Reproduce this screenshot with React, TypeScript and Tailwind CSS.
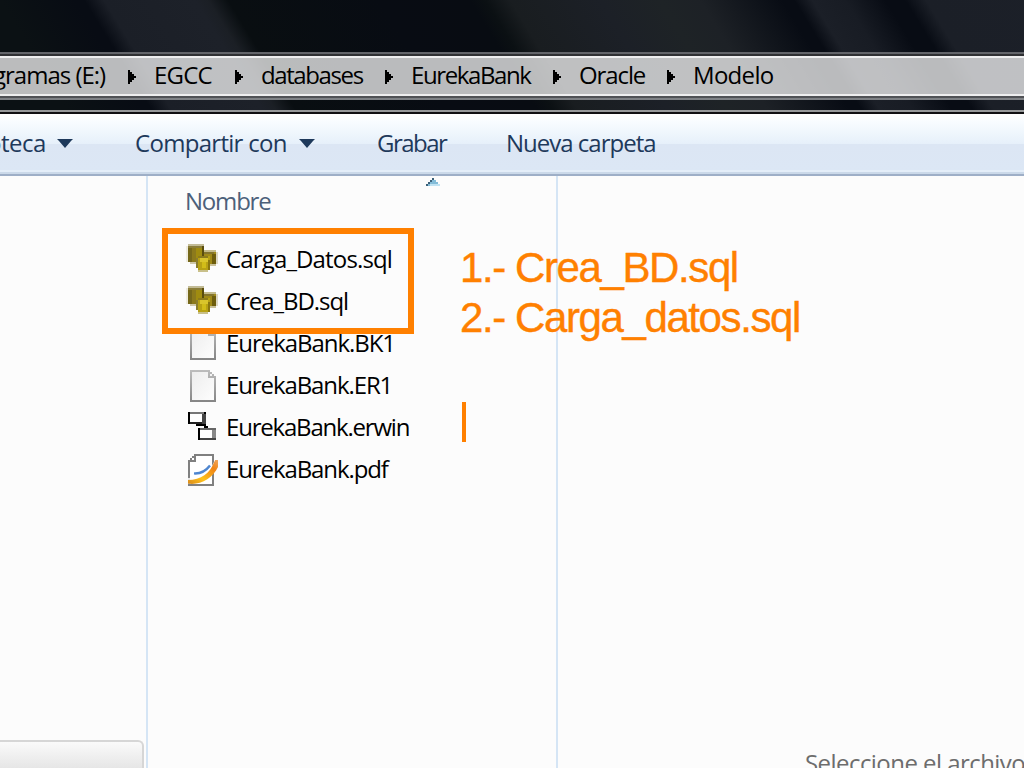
import React from 'react';

const ui = "font-['Open_Sans','Noto_Sans',sans-serif] whitespace-pre";

function Crumb({ label, className, last }: { label: string; className: string; last?: boolean }) {
  return (
    <div className={`flex shrink-0 items-center ${className}`}>
      <span className="grow pb-[2px]">{label}</span>
      {!last && (
        <svg width="8" height="14" viewBox="0 0 4 7" shapeRendering="crispEdges" className="mt-[2px] mr-[18px] shrink-0">
          <path d="M0 0h1v1h1v1h1v1h1v1h-1v1h-1v1h-1v1h-1z" fill="#000" />
        </svg>
      )}
    </div>
  );
}

function Caret({ className }: { className: string }) {
  return (
    <svg width="16" height="10" viewBox="0 0 16 10" className={`shrink-0 ${className}`}>
      <path d="M0 0h16l-2 2-6 7-6-7z" fill="#1e395b" />
    </svg>
  );
}

function SqlIcon() {
  return (
    <svg width="32" height="32" viewBox="0 0 16 16" shapeRendering="crispEdges">
      <path d="M0 1h1v8h-1z" fill="#efece0" />
      <path d="M1 1h8v8h-8z" fill="#8c7a1c" />
      <path d="M1 0h8v1h-8z" fill="#c2bb96" />
      <path d="M1 1h8v1h-8z" fill="#8b7e3a" />
      <path d="M1 2h2v7h-2z" fill="#75681a" />
      <path d="M5 2h3v6h-3z" fill="#a08c10" />
      <path d="M8 1h1v7h-1z" fill="#5a4d0e" />
      <path d="M2 9h4v1h-4z" fill="#cfc8a8" />
      <path d="M9 4h6v6h-6z" fill="#a08a18" />
      <path d="M9 3h6v1h-6z" fill="#c4bb8c" />
      <path d="M9 4h5v1h-5z" fill="#84752c" />
      <path d="M13 5h2v5h-2z" fill="#6e5d0c" />
      <path d="M15 4h1v6h-1z" fill="#dcd7c2" />
      <path d="M11 10h4v1h-4z" fill="#c9c19a" />
      <path d="M6 6h6v7h-6z" fill="#b8a214" />
      <path d="M6 6h5v1h-5z" fill="#8d7c1c" />
      <path d="M7 7h4v2h-4z" fill="#d9c52c" />
      <path d="M8 9h2v3h-2z" fill="#d2bd18" />
      <path d="M11 8h1v5h-1z" fill="#8a7710" />
      <path d="M5 7h1v5h-1z" fill="#8a7d30" />
      <path d="M6 13h5v1h-5z" fill="#c9c08a" />
    </svg>
  );
}

function FileIcon() {
  return (
    <svg width="32" height="32" viewBox="0 0 16 16" shapeRendering="crispEdges">
      <defs>
        <linearGradient id="sheet" x1="0" y1="0" x2="1" y2="1">
          <stop offset="0" stopColor="#ededed" />
          <stop offset="1" stopColor="#fdfdfd" />
        </linearGradient>
        <linearGradient id="edge" x1="0" y1="0" x2="0" y2="1">
          <stop offset="0" stopColor="#bdbdbd" />
          <stop offset="1" stopColor="#858585" />
        </linearGradient>
      </defs>
      <path d="M2 0h10v1h1v1h1v1h1v13h-13z" fill="url(#edge)" />
      <path d="M3 1h8v3h3v11h-11z" fill="url(#sheet)" />
      <path d="M12 2h1v1h-1z" fill="#f4f4f4" />
    </svg>
  );
}

function ErwinIcon() {
  return (
    <svg width="32" height="32" viewBox="0 0 16 16" shapeRendering="crispEdges">
      <path d="M1 0h9v6h-9z" fill="#000" />
      <path d="M2 0h7v1h-7z" fill="#777" />
      <path d="M2 1h6v4h-6z" fill="#fff" />
      <path d="M8 1h2v5h-2z" fill="#444" />
      <path d="M2 5h6v1h-6z" fill="#222" />
      <path d="M5 6h5v1h-5zM9 7h2v1h-2z" fill="#000" />
      <path d="M6 8h9v6h-9z" fill="#000" />
      <path d="M7 8h8v1h-8z" fill="#666" />
      <path d="M7 9h6v4h-6z" fill="#fff" />
      <path d="M13 9h2v4h-2z" fill="#888" />
      <path d="M7 13h8v1h-8z" fill="#444" />
    </svg>
  );
}

function PdfIcon() {
  return (
    <svg width="32" height="32" viewBox="0 0 16 16">
      <defs>
        <linearGradient id="swoosh" x1="0" y1="1" x2="1" y2="0">
          <stop offset="0" stopColor="#d98a1c" />
          <stop offset="0.35" stopColor="#ffc21a" />
          <stop offset="0.75" stopColor="#f08414" />
          <stop offset="1" stopColor="#f0a860" />
        </linearGradient>
      </defs>
      <path d="M4 0h10v16h-13v-13h1v-1h1v-1h1z" fill="#808080" shapeRendering="crispEdges" />
      <path d="M5 1h8v14h-11v-11h3z" fill="#fff" shapeRendering="crispEdges" />
      <path d="M3 2h1v1h-1z" fill="#fff" shapeRendering="crispEdges" />
      <path d="M4 9.7c3 .2 6-1.4 8-4" fill="none" stroke="#4f86cf" strokeWidth="1.2" />
      <path d="M1 12C7 12.2 12 8.5 14 4V3h2v3C13 12 7 15.5 1 14.8z" fill="#fff" opacity=".8" />
      <path d="M1 13C7.500 13 12 9.500 14 4.200L14.600 3H16V6.500C13.500 12 7 15.800 1 14.800z" fill="url(#swoosh)" />
    </svg>
  );
}

const files = [
  { name: 'Carga_Datos.sql', icon: <SqlIcon />, track: 'tracking-[-0.85px]' },
  { name: 'Crea_BD.sql', icon: <SqlIcon />, track: 'tracking-[-1.05px]' },
  { name: 'EurekaBank.BK1', icon: <FileIcon />, track: 'tracking-[-1.05px]' },
  { name: 'EurekaBank.ER1', icon: <FileIcon />, track: 'tracking-[-1.1px]' },
  { name: 'EurekaBank.erwin', icon: <ErwinIcon />, track: 'tracking-[-1.2px]' },
  { name: 'EurekaBank.pdf', icon: <PdfIcon />, track: 'tracking-[-1.1px]' },
];

export default function App() {
  return (
    <div className={`relative flex h-[768px] w-[1024px] flex-col overflow-hidden bg-[#fcfcfc] text-[24px] leading-[32px] ${ui}`}>
      <header className="relative flex h-[114px] shrink-0 flex-col overflow-hidden bg-[#080d12]">
        <div className="absolute top-0 left-[-100px] h-[114px] w-[1224px] origin-top-left skew-x-[31.6deg] bg-[linear-gradient(90deg,#0b1114_0px,#0b1114_100px,#080c14_175px,#080c14_184px,#1b1f27_204px,#1d2129_295px,#1b1f25_308px,#090e11_328px,#080c13_480px,#080c12_570px,#0b1013_585px,#191d20_610px,#1c2027_700px,#1e2326_760px,#1d2126_800px,#080c14_882px,#080c14_894px,#1b1f27_912px,#181c24_945px,#080c14_985px,#080c14_1005px,#1b1f27_1026px,#1c2029_1224px)]" />
        <div className="relative mt-[52px] flex h-[48px] flex-col border-t-2 border-b-2 border-[#63656a] border-b-[#7f8286]">
          <div className="h-[2px] shrink-0 bg-[#2f3033]" />
          <div className="flex h-10 shrink-0 items-center overflow-hidden border-y-2 border-[#eeeeef] bg-white/72 bg-clip-padding text-black">
            <Crumb label="gramas (E:)" className="ml-[-7px] w-[161px] tracking-[-1px]" />
            <Crumb label="EGCC" className="w-[107px] tracking-[-0.8px]" />
            <Crumb label="databases" className="w-[150px] tracking-[-1.4px]" />
            <Crumb label="EurekaBank" className="w-[168px] tracking-[-1.4px]" />
            <Crumb label="Oracle" className="w-[114px] tracking-[-1.1px]" />
            <Crumb label="Modelo" className="w-[100px] tracking-[-0.7px]" last />
          </div>
          <div className="h-[2px] shrink-0 bg-[#505256]" />
        </div>
        <div className="relative mt-[10px] h-[4px] border-t-2 border-[#97999a] bg-[#101012]" />
      </header>

      <nav className="flex h-[62px] shrink-0 items-center border-b-2 border-[#9eafc7] bg-[linear-gradient(180deg,#fff_0px,#f8fcff_8px,#e6f0fa_30px,#dce6f4_30px,#dce7f5_56px,#e4eef9_56px,#e4eef9_58px,#cbd9e9_58px,#cbd9e9_60px)] text-[#1e395b]">
        <div className="ml-[-13px] flex w-[148px] items-center">
          <span className="pb-[2px] tracking-[-0.5px]">oteca</span>
          <Caret className="ml-[11px]" />
        </div>
        <div className="flex w-[242px] items-center">
          <span className="pb-[2px] tracking-[-0.7px]">Compartir con</span>
          <Caret className="ml-[12px]" />
        </div>
        <span className="w-[129px] pb-[2px] tracking-[-1.5px]">Grabar</span>
        <span className="pb-[2px] tracking-[-1px]">Nueva carpeta</span>
      </nav>

      <main className="flex min-h-0 grow">
        <aside className="flex w-[148px] shrink-0 flex-col justify-end border-r-2 border-[#d5e5f5]">
          <div className="mr-[2px] h-[28px] rounded-tr-md border-t-2 border-r-2 border-[#d6d6d6] bg-linear-to-b from-[#fafafa] to-[#e6e6e6]" />
        </aside>
        <section className="flex w-[410px] shrink-0 flex-col border-r-2 border-[#d5e5f5]">
          <svg width="14" height="8" viewBox="0 0 7 4" shapeRendering="crispEdges" className="mt-[2px] ml-[278px] shrink-0">
            <path d="M3 0h1v1h1v1h1v1h1v1h-7v-1h1v-1h1v-1h1z" fill="#83bcd8" />
            <path d="M3 0h1v1h-1v1h-1v1h-1v1h-1v-1h1v-1h1v-1h1z" fill="#3c6078" />
            <path d="M2 3h5v1h-5z" fill="#bfe2f2" />
          </svg>
          <div className="ml-[37px] h-[53px] leading-[30px] tracking-[-1.2px] text-[#4c607a]">Nombre</div>
          <ul className="ml-[38px] flex flex-col">
            {files.map((f) => (
              <li key={f.name} className="flex h-[42px] items-center gap-2 text-black">
                {f.icon}
                <span className={`pb-[2px] ${f.track}`}>{f.name}</span>
              </li>
            ))}
          </ul>
        </section>
        <section className="flex grow flex-col justify-end overflow-hidden">
          <div className="mb-[-11px] ml-[247px] tracking-[-0.55px] text-[#6d6d6d]">Seleccione el archivo</div>
        </section>
      </main>

      <div className="absolute top-[228px] left-[162px] h-[106px] w-[252px] border-6 border-[#ff8000]" />
      <div className="absolute top-[243px] left-[460px] font-['Liberation_Sans',Arial,sans-serif] text-[42px] leading-[50px] tracking-[-1.4px] text-[#ff8000] [-webkit-text-stroke:0.4px_#ff8000]">
        <div>1.- Crea_BD.sql</div>
        <div>2.- Carga_datos.sql</div>
        <div className="mt-[59px] ml-[2px] h-10 w-1 bg-[#ff8000]" />
      </div>
    </div>
  );
}
